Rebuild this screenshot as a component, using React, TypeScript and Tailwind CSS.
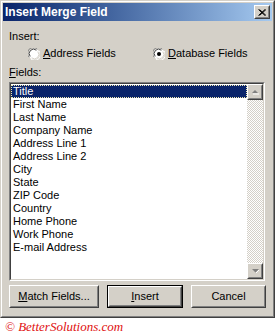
import React from "react";

const items = [
  "Title",
  "First Name",
  "Last Name",
  "Company Name",
  "Address Line 1",
  "Address Line 2",
  "City",
  "State",
  "ZIP Code",
  "Country",
  "Home Phone",
  "Work Phone",
  "E-mail Address",
];

function Radio({ checked }: { checked?: boolean }) {
  return (
    <svg width="12" height="12" viewBox="0 0 12 12" className="shrink-0">
      <circle cx="6" cy="6" r="5.5" fill="#ffffff" />
      <path d="M1.2 9.2 A5.5 5.5 0 0 1 9.2 1.2" fill="none" stroke="#808080" strokeWidth="1" />
      <path d="M2.2 8.4 A4.4 4.4 0 0 1 8.4 2.2" fill="none" stroke="#404040" strokeWidth="1" />
      <path d="M10.8 2.8 A5.5 5.5 0 0 1 2.8 10.8" fill="none" stroke="#ffffff" strokeWidth="1" />
      <path d="M9.8 3.6 A4.4 4.4 0 0 1 3.6 9.8" fill="none" stroke="#d4d0c8" strokeWidth="1" />
      {checked && <circle cx="6" cy="6" r="2" fill="#000000" />}
    </svg>
  );
}

function Raised({ children, className = "" }: { children: React.ReactNode; className?: string }) {
  return (
    <div className={`border border-t-white border-l-white border-r-[#404040] border-b-[#404040] ${className}`}>
      <div className="w-full h-full border border-t-[#d4d0c8] border-l-[#d4d0c8] border-r-[#808080] border-b-[#808080] bg-[#d4d0c8] flex items-center justify-center">
        {children}
      </div>
    </div>
  );
}

function Arrow({ up }: { up?: boolean }) {
  return (
    <svg width="9" height="6" viewBox="0 0 9 6">
      {up ? (
        <>
          <path d="M4 1 L7 4 L1 4 Z" fill="#808080" />
          <path d="M2 5 H8" stroke="#ffffff" strokeWidth="1" />
        </>
      ) : (
        <>
          <path d="M1 1 H8 L4.5 4.5 Z" fill="#808080" />
          <path d="M5 5 L8 2" stroke="#ffffff" strokeWidth="1" />
        </>
      )}
    </svg>
  );
}

export default function App() {
  return (
    <div
      className="w-[275px] h-[333px] bg-white overflow-hidden text-[11px] text-black"
      style={{ fontFamily: '"Liberation Sans", Arial, sans-serif' }}
    >
      {/* Dialog window */}
      <div className="h-[318px] w-[275px] border border-t-[#d4d0c8] border-l-[#d4d0c8] border-r-[#404040] border-b-[#404040]">
        <div className="h-full border border-t-white border-l-white border-r-[#808080] border-b-[#808080] bg-[#d4d0c8] p-px flex flex-col">
          {/* Title bar */}
          <div className="h-[18px] flex items-center justify-between pl-[2px] pr-[2px] bg-gradient-to-r from-[#0a246a] to-[#a6caf0]">
            <span className="text-white font-bold text-[12px] leading-none">Insert Merge Field</span>
            <Raised className="w-[16px] h-[14px]">
              <svg width="8" height="7" viewBox="0 0 8 7">
                <path d="M0.5 0.5 L7 6.5 M1.5 0.5 L8 6.5 M7 0.5 L0.5 6.5 M8 0.5 L1.5 6.5" stroke="#000" strokeWidth="1" />
              </svg>
            </Raised>
          </div>

          {/* Body */}
          <div className="pl-[6px] pr-[6px] flex flex-col">
            <div className="mt-[9px] h-[13px] leading-[13px]">Insert:</div>

            <div className="mt-[4px] h-[13px] flex items-center">
              <div className="ml-[19px] w-[125px] flex items-center gap-[3px]">
                <Radio />
                <span className="leading-[13px]">
                  <u>A</u>ddress Fields
                </span>
              </div>
              <div className="flex items-center gap-[3px]">
                <Radio checked />
                <span className="leading-[13px]">
                  <u>D</u>atabase Fields
                </span>
              </div>
            </div>

            <div className="mt-[6px] h-[13px] leading-[13px]">
              <u>F</u>ields:
            </div>

            {/* List box */}
            <div className="mt-[3px] w-[256px] h-[199px] border border-t-[#808080] border-l-[#808080] border-r-white border-b-white">
              <div className="h-full border border-t-[#404040] border-l-[#404040] border-r-[#d4d0c8] border-b-[#d4d0c8] bg-white flex">
                <div className="flex-1 flex flex-col pt-[1px]">
                  {items.map((item, i) => (
                    <div
                      key={item}
                      className={`h-[13px] leading-[13px] pl-[2px] ${
                        i === 0
                          ? "bg-[#0a246a] text-white outline-1 outline-dotted outline-[#f0e8b0] -outline-offset-1"
                          : ""
                      }`}
                    >
                      {item}
                    </div>
                  ))}
                </div>
                {/* Scrollbar */}
                <div className="w-[16px] flex flex-col bg-[repeating-conic-gradient(#d4d0c8_0%_25%,#ffffff_0%_50%)] bg-size-[2px_2px]">
                  <Raised className="w-[16px] h-[16px]">
                    <Arrow up />
                  </Raised>
                  <div className="flex-1" />
                  <Raised className="w-[16px] h-[16px]">
                    <Arrow />
                  </Raised>
                </div>
              </div>
            </div>

            {/* Buttons */}
            <div className="mt-[4px] flex items-center gap-[8px]">
              <Raised className="w-[90px] h-[23px]">
                <span>
                  <u>M</u>atch Fields...
                </span>
              </Raised>
              <div className="w-[76px] h-[23px] border border-black">
                <Raised className="w-full h-full">
                  <span>
                    <u>I</u>nsert
                  </span>
                </Raised>
              </div>
              <Raised className="w-[75px] h-[23px]">
                <span>Cancel</span>
              </Raised>
            </div>
          </div>
        </div>
      </div>

      {/* Watermark */}
      <div
        className="pl-[5px] mt-[2px] text-[13px] leading-[13px] italic text-[#e01010]"
        style={{ fontFamily: '"Liberation Serif", "Times New Roman", serif' }}
      >
        © BetterSolutions.com
      </div>
    </div>
  );
}
